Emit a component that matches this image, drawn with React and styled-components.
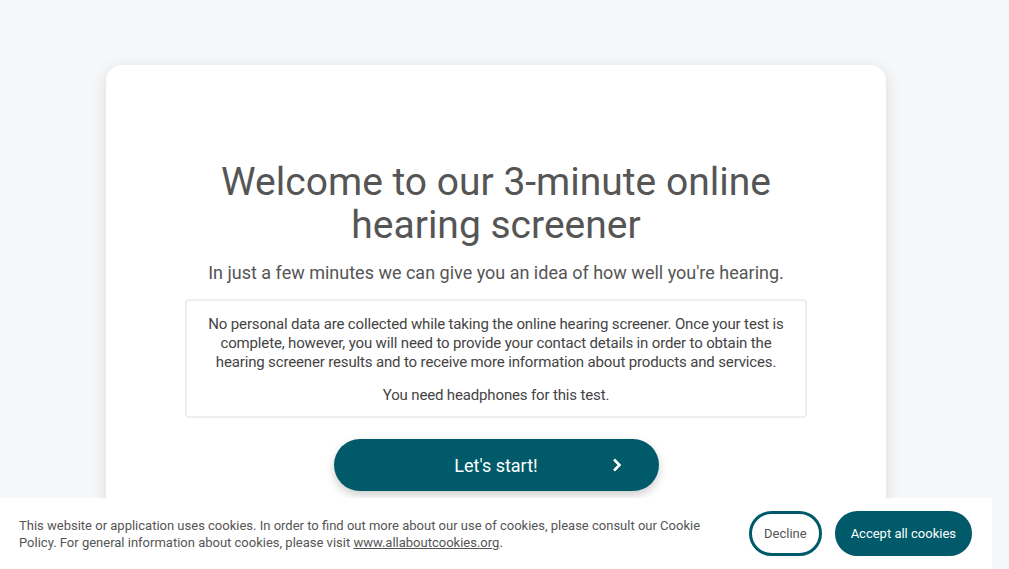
import React from "react";
import styled, { createGlobalStyle } from "styled-components";

const Global = createGlobalStyle`
  html, body { margin: 0; padding: 0; }
  body {
    background: #f6f7f9;
    font-family: Roboto, "Noto Sans", Arial, sans-serif;
    color: #555;
    height: 569px;
    overflow: hidden;
  }
`;

const Page = styled.main`
  display: flex;
  justify-content: center;
  padding-top: 65px;
  padding-right: 17px;
`;

const Card = styled.section`
  width: 780px;
  min-height: 560px;
  box-sizing: border-box;
  background: #fff;
  border-radius: 16px;
  box-shadow: 0 4px 16px rgba(0, 0, 0, 0.12);
  display: flex;
  flex-direction: column;
  align-items: center;
  padding: 96px 78px 0;
  text-align: center;
`;

const Title = styled.h1`
  margin: 0;
  font-size: 39px;
  font-weight: 400;
  line-height: 43px;
  color: #555;
  max-width: 580px;
`;

const Subtitle = styled.p`
  margin: 14px 0 0;
  font-size: 18px;
  line-height: 24px;
  color: #555;
`;

const InfoBox = styled.div`
  margin-top: 14px;
  width: 622px;
  box-sizing: border-box;
  border: 2px solid #eeeeee;
  border-radius: 4px;
  padding: 14px 20px 11px;
  font-size: 15px;
  letter-spacing: -0.15px;
  line-height: 19px;
  color: #444;
`;

const InfoText = styled.p`
  margin: 0;
  & + & { margin-top: 14px; }
`;

const StartButton = styled.button`
  margin-top: 21px;
  width: 325px;
  height: 52px;
  border: none;
  border-radius: 26px;
  background: #005a69;
  color: #fff;
  font-family: inherit;
  font-size: 18px;
  box-shadow: 0 4px 10px rgba(0, 0, 0, 0.2);
  display: flex;
  align-items: center;
  justify-content: center;
  position: relative;
  cursor: pointer;
`;

const Chevron = styled.svg`
  position: absolute;
  right: 36px;
  top: 50%;
  transform: translateY(-50%);
`;

const Banner = styled.div`
  position: fixed;
  left: 0;
  right: 17px;
  bottom: 0;
  height: 71px;
  background: #fff;
  display: flex;
  align-items: flex-start;
  padding: 13px 20px 0 19px;
  box-sizing: border-box;
  gap: 20px;
`;

const BannerText = styled.p`
  margin: 6px 0 0;
  flex: 1;
  font-size: 13px;
  line-height: 17px;
  color: #555;
  max-width: 700px;
  a { color: #555; }
`;

const Actions = styled.div`
  display: flex;
  gap: 13px;
  margin-left: auto;
`;

const CookieButton = styled.button`
  height: 45px;
  border-radius: 23px;
  font-family: inherit;
  font-size: 13px;
  padding: 0 ${(p) => (p.$primary ? "13px" : "12px")};
  border: 3px solid #005a69;
  background: ${(p) => (p.$primary ? "#005a69" : "#fff")};
  color: ${(p) => (p.$primary ? "#fff" : "#555")};
  cursor: pointer;
`;

export default function App() {
  return (
    <>
      <Global />
      <Page>
        <Card>
          <Title>Welcome to our 3-minute online hearing screener</Title>
          <Subtitle>
            In just a few minutes we can give you an idea of how well you're hearing.
          </Subtitle>
          <InfoBox>
            <InfoText>
              No personal data are collected while taking the online hearing screener. Once your test is
              complete, however, you will need to provide your contact details in order to obtain the
              hearing screener results and to receive more information about products and services.
            </InfoText>
            <InfoText>You need headphones for this test.</InfoText>
          </InfoBox>
          <StartButton>
            Let's start!
            <Chevron width="12" height="14" viewBox="0 0 12 14">
              <path d="M3 1.5 L8.5 7 L3 12.5" fill="none" stroke="#fff" strokeWidth="2.6" />
            </Chevron>
          </StartButton>
        </Card>
      </Page>
      <Banner>
        <BannerText>
          This website or application uses cookies. In order to find out more about our use of cookies, please consult our Cookie
          Policy. For general information about cookies, please visit <a href="#">www.allaboutcookies.org</a>.
        </BannerText>
        <Actions>
          <CookieButton>Decline</CookieButton>
          <CookieButton $primary>Accept all cookies</CookieButton>
        </Actions>
      </Banner>
    </>
  );
}
